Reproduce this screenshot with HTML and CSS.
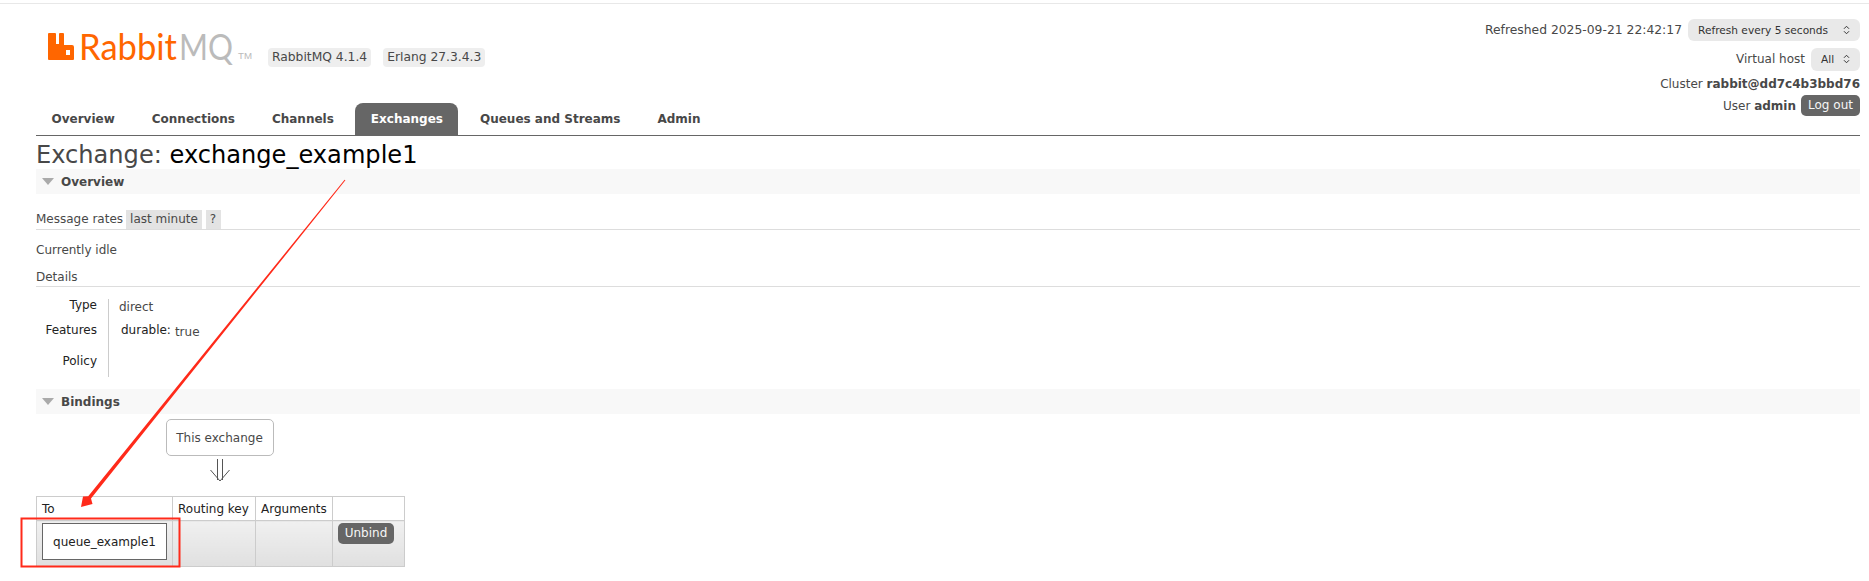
FILE: index.html
```html
<!DOCTYPE html>
<html lang="en">
<head>
<meta charset="utf-8">
<title>RabbitMQ Management</title>
<link rel="stylesheet" href="styles.css">
</head>
<body>
<div class="page">
  <header class="top">
    <div class="top-left">
      <div class="brand">
        <svg class="logo" viewBox="0 -8 220 44" width="220" height="44">
          <path fill="#ff6600" fill-rule="evenodd" d="M1 0h6a1 1 0 0 1 1 1v10h3V1a1 1 0 0 1 1-1h3a1 1 0 0 1 1 1v11h8a2 2 0 0 1 2 2v12a1 1 0 0 1-1 1H1a1 1 0 0 1-1-1V1a1 1 0 0 1 1-1zM18 17v5h4v-5z"/>
          <text class="logo-word" x="31" y="27" fill="#ff6600" textLength="98" lengthAdjust="spacingAndGlyphs">Rabbit</text>
          <text class="logo-word" x="131" y="27" fill="#bbbbbb" textLength="54" lengthAdjust="spacingAndGlyphs">MQ</text>
          <text class="logo-tm" x="190" y="26" fill="#bbbbbb" textLength="14" lengthAdjust="spacingAndGlyphs">TM</text>
        </svg>
        <span class="version">RabbitMQ 4.1.4</span>
        <span class="version">Erlang 27.3.4.3</span>
      </div>
      <nav class="tabs">
        <a class="tab">Overview</a>
        <a class="tab">Connections</a>
        <a class="tab">Channels</a>
        <a class="tab tab-active">Exchanges</a>
        <a class="tab">Queues and Streams</a>
        <a class="tab">Admin</a>
      </nav>
    </div>
    <div class="status">
      <div class="status-row status-refresh"><span class="refreshed">Refreshed 2025-09-21 22:42:17</span><span class="select select-wide">Refresh every 5 seconds<svg class="updown" viewBox="0 0 8 12" width="7" height="10"><path d="M1 4.5 4 1.5 7 4.5M1 7.5 4 10.5 7 7.5" fill="none" stroke="#333" stroke-width="1.2"/></svg></span></div>
      <div class="status-row status-vhost"><span>Virtual host</span><span class="select select-small">All<svg class="updown" viewBox="0 0 8 12" width="7" height="10"><path d="M1 4.5 4 1.5 7 4.5M1 7.5 4 10.5 7 7.5" fill="none" stroke="#333" stroke-width="1.2"/></svg></span></div>
      <div class="status-row status-cluster">Cluster&nbsp;<b>rabbit@dd7c4b3bbd76</b></div>
      <div class="status-row status-user">User&nbsp;<b>admin</b><span class="btn btn-logout">Log out</span></div>
    </div>
  </header>

  <h1 class="title">Exchange: <b>exchange_example1</b></h1>

  <section class="section">
    <h2 class="band"><i class="tri"></i>Overview</h2>
    <h3 class="sub sub-rates"><span>Message rates</span><span class="chip chip-first">last minute</span><span class="chip chip-q">?</span></h3>
    <p class="idle">Currently idle</p>
    <h3 class="sub sub-details">Details</h3>
    <div class="facts">
      <div class="fact-labels">
        <div class="fl-type">Type</div>
        <div class="fl-features">Features</div>
        <div class="fl-policy">Policy</div>
      </div>
      <div class="fact-values">
        <div class="fv-type">direct</div>
        <div class="fv-features"><span class="key">durable:</span><span class="val">true</span></div>
      </div>
    </div>
  </section>

  <section class="section section-bindings">
    <h2 class="band"><i class="tri"></i>Bindings</h2>
    <div class="diagram">
      <div class="node node-this">This exchange</div>
      <svg class="dbl-arrow" viewBox="0 0 20 23" width="20" height="23"><path d="M7.5 0V21M12.5 0V21M.5 11 10 22 19.5 11" fill="none" stroke="#555" stroke-width="1"/></svg>
    </div>
    <table class="bindings">
      <thead>
        <tr><th class="col-to">To</th><th class="col-key">Routing key</th><th class="col-args">Arguments</th><th class="col-act"></th></tr>
      </thead>
      <tbody>
        <tr>
          <td><div class="node node-queue">queue_example1</div></td>
          <td></td>
          <td></td>
          <td><span class="btn btn-unbind">Unbind</span></td>
        </tr>
      </tbody>
    </table>
  </section>
</div>

<svg class="annotation" width="1869" height="581" viewBox="0 0 1869 581">
  <polygon points="344.6,179.7 345.4,180.3 91,498.4 92.5,504 81,507 83,496.5 88.2,496.2" fill="#ff2a1a"/>
  <rect x="21.5" y="518.5" width="158" height="48" fill="none" stroke="#ff2a1a" stroke-width="2"/>
</svg>
</body>
</html>
```
FILE: styles.css
```css
* { box-sizing: border-box; }
html, body { margin: 0; padding: 0; background: #fff; }
body {
  font-family: "DejaVu Sans", Verdana, sans-serif;
  font-size: 12px;
  color: #484848;
  height: 581px;
  overflow: hidden;
}
.page {
  border-top: 1px solid #e8e8e8;
  margin-top: 3px;
  padding: 0 9px 0 36px;
}
.top {
  display: flex;
  justify-content: space-between;
  align-items: flex-start;
  height: 132px;
  border-bottom: 1px solid #666;
}
.top-left { display: flex; flex-direction: column; }
.brand {
  display: flex;
  align-items: flex-start;
  height: 99px;
  padding: 21px 0 0 12px;
}
.logo { flex: none; }
.logo-word {
  font-family: "Lato", sans-serif;
  font-weight: 400;
  font-size: 36px;
}
.logo-tm { font-family: "Liberation Sans", sans-serif; font-size: 9px; }
.version {
  background: #eee;
  border-radius: 4px;
  height: 19px;
  line-height: 19px;
  padding: 0 4px;
  margin-top: 23px;
  margin-right: 12px;
  font-size: 12.3px;
  white-space: nowrap;
}
.tabs { display: flex; height: 32px; }
.tab {
  font-weight: bold;
  color: #484848;
  padding: 0 15.5px;
  line-height: 33px;
  margin-right: 6px;
  white-space: nowrap;
  font-size: 12px;
}
.tab-active {
  background: #666;
  color: #fff;
  border-radius: 8px 8px 0 0;
}
.status {
  display: flex;
  flex-direction: column;
  align-items: flex-end;
  padding-top: 15px;
}
.status-row { display: flex; align-items: center; white-space: nowrap; }
.refreshed { font-size: 12.35px; }
.status-refresh { height: 22px; }
.status-vhost { height: 24px; margin-top: 6px; }
.status-cluster { height: 16px; margin-top: 5px; }
.status-user { height: 21px; margin-top: 3px; }
.select {
  display: inline-flex;
  align-items: center;
  justify-content: space-between;
  background: #e9e9e9;
  border-radius: 6px;
  font-size: 10.6px;
  color: #333;
  padding: 0 10px;
  margin-left: 6px;
}
.select-wide { width: 172px; height: 22px; }
.select-small { width: 49px; height: 23px; }
.btn {
  display: inline-block;
  background: #666;
  color: #f6f6f6;
  border-radius: 5px;
  text-align: center;
}
.btn-logout { width: 59px; height: 21px; line-height: 21px; margin-left: 5px; }
.title {
  margin: 0;
  padding-top: 5px;
  height: 33px;
  font-weight: normal;
  font-size: 24.1px;
  line-height: 29px;
  color: #484848;
  white-space: nowrap;
}
.title b { font-weight: normal; color: #000; }
.band {
  margin: 0;
  height: 25px;
  background: #f8f8f8;
  display: flex;
  align-items: center;
  font-size: 12px;
  font-weight: bold;
  color: #484848;
  padding-left: 6px;
}
.tri {
  width: 0; height: 0;
  border-left: 6px solid transparent;
  border-right: 6px solid transparent;
  border-top: 7px solid #aaa;
  margin-right: 7px;
}
.sub {
  margin: 0;
  font-weight: normal;
  font-size: 12px;
  border-bottom: 1px solid #ddd;
}
.sub-rates { margin-top: 16px; height: 20px; line-height: 19px; display: flex; white-space: nowrap; }
.chip { background: #e3e3e3; height: 19px; padding: 0 4px; margin-right: 4px; }
.chip-first { margin-left: 3px; }
.chip-q { padding: 0 4px; width: 15px; }
.idle { margin: 0; height: 36px; line-height: 40px; }
.sub-details { height: 21px; line-height: 23px; }
.facts { display: flex; margin-top: 12px; height: 78px; }
.fact-labels {
  box-sizing: content-box;
  width: 61px;
  padding-right: 11px;
  text-align: right;
  color: #222;
  border-right: 1px solid #ccc;
}
.fl-type { height: 24px; line-height: 13px; }
.fl-features { height: 31px; line-height: 14px; }
.fl-policy { line-height: 14px; }
.fact-values { padding-left: 10px; }
.fv-type { height: 24px; line-height: 17px; }
.fv-features { display: flex; padding-left: 2px; }
.key { color: #222; line-height: 14px; }
.val { margin-left: 4px; line-height: 19px; }
.section-bindings { margin-top: 12px; }
.diagram {
  display: flex;
  flex-direction: column;
  align-items: center;
  width: 367px;
  height: 82px;
  padding-top: 5px;
}
.node { text-align: center; }
.node-this {
  width: 108px;
  height: 37px;
  line-height: 36px;
  border: 1px solid #bbb;
  border-radius: 5px;
}
.dbl-arrow { margin-top: 3px; }
.bindings {
  border-collapse: collapse;
  table-layout: fixed;
  width: 368px;
  font-size: 12px;
}
.bindings th, .bindings td { border: 1px solid #ccc; padding: 0; vertical-align: top; }
.bindings th {
  font-weight: normal;
  color: #222;
  background: #fff;
  height: 22px;
  line-height: 22px;
  padding-top: 1px;
  text-align: left;
  padding-left: 5px;
  white-space: nowrap;
}
.bindings td {
  height: 46px;
  background: linear-gradient(#f0f0f0, #e0e0e0);
}
.col-to { width: 136px; }
.col-key { width: 83px; }
.col-args { width: 77px; }
.col-act { width: 72px; }
.node-queue {
  width: 125px;
  height: 37px;
  line-height: 36px;
  margin: 2px 0 0 5px;
  border: 1px solid #666;
  background: #fff;
  color: #222;
}
.btn-unbind { width: 56px; height: 21px; line-height: 21px; margin: 2px 0 0 5px; display: block; }
.annotation { position: absolute; left: 0; top: 0; pointer-events: none; }
```
